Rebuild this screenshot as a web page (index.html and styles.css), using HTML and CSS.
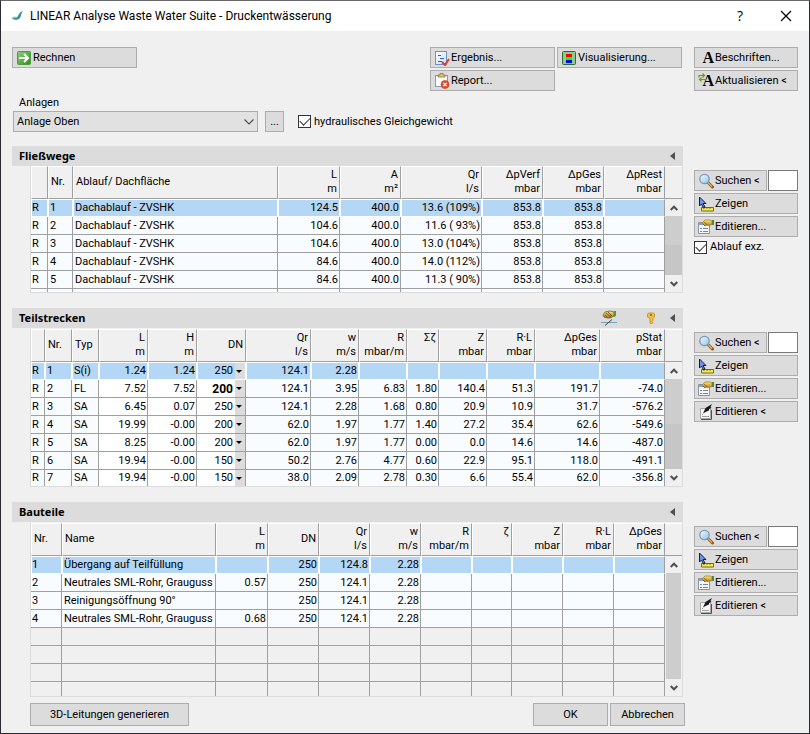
FILE: index.html
```html
<!DOCTYPE html>
<html lang="de">
<head>
<meta charset="utf-8">
<title>LINEAR Analyse Waste Water Suite - Druckentwässerung</title>
<link rel="stylesheet" href="styles.css">
</head>
<body>
<svg class="sprite" aria-hidden="true">
  <defs>
    <linearGradient id="g-green" x1="0" y1="0" x2="1" y2="1"><stop offset="0" stop-color="#8fd07c"/><stop offset="1" stop-color="#2f8f14"/></linearGradient>
    <linearGradient id="g-paper" x1="0" y1="0" x2="1" y2="1"><stop offset="0" stop-color="#fff"/><stop offset="1" stop-color="#c9dcf5"/></linearGradient>
    <linearGradient id="g-lens" x1="0" y1="0" x2="1" y2="1"><stop offset="0" stop-color="#f2fbff"/><stop offset="1" stop-color="#8cc4ee"/></linearGradient>
    <linearGradient id="g-hand" x1="0" y1="0" x2="0" y2="1"><stop offset="0" stop-color="#ffe680"/><stop offset="1" stop-color="#b07a10"/></linearGradient>
  </defs>
  <symbol id="i-run" viewBox="0 0 16 16">
    <rect x="1.500" y="1.500" width="13" height="13" rx="1" fill="url(#g-green)" stroke="#4f9a3c"/>
    <path d="M3 8h8M8 4l4 4-4 4" fill="none" stroke="#fff" stroke-width="2"/>
  </symbol>
  <symbol id="i-result" viewBox="0 0 16 16">
    <rect x="1.500" y="1.500" width="11" height="13" fill="url(#g-paper)" stroke="#6e93c8"/>
    <path d="M4 5.500h3M6 8.500h4M4 11.500h4" stroke="#2c63c8" fill="none"/>
    <path d="M8 12l3 3 4-6" fill="none" stroke="#e03c1c" stroke-width="2"/>
  </symbol>
  <symbol id="i-report" viewBox="0 0 16 16">
    <rect x="1.500" y="2.500" width="12" height="11" fill="#fbfbfd" stroke="#8c98ac"/>
    <path d="M4 4V2h2V.5h3V2h2v2z" fill="#d8c878" stroke="#7c6c34" stroke-width=".7"/>
    <circle cx="11" cy="11.500" r="4" fill="#e8502c" stroke="#c03414" stroke-width=".6"/>
    <path d="M9.300 9.800l3.400 3.400m0-3.400l-3.400 3.400" stroke="#fff" stroke-width="1.200"/>
  </symbol>
  <symbol id="i-visual" viewBox="0 0 16 16">
    <rect x="1.500" y="1.500" width="13" height="13" rx="1" fill="#8fca8f" stroke="#2f6a33"/>
    <path fill="#f00" d="M5 4h6v3H5z"/><path fill="#0f0" d="M5 7h6v3H5z"/><path fill="#00f" d="M5 10h6v3H5z"/>
  </symbol>
  <symbol id="i-swap" viewBox="0 0 8 9">
    <path d="M1 4.500V2.500h5M2.500 6.500H7M4.500.5l2 2-2 2M3.500 4.500l-2 2 2 2" fill="none" stroke="#6a9a10" stroke-width="1.200"/>
  </symbol>
  <symbol id="i-search" viewBox="0 0 16 16">
    <path d="M10 9.500l4.500 4.500" stroke="#8a5a20" stroke-width="3" stroke-linecap="round"/>
    <path d="M10 9.500l4 4" stroke="#f0a850" stroke-width="1.500"/>
    <circle cx="6.500" cy="6" r="4.700" fill="url(#g-lens)" stroke="#7c96b4" stroke-width="1.300"/>
  </symbol>
  <symbol id="i-show" viewBox="0 0 16 16">
    <path d="M3.500 15v-3.500h12V15z" fill="#ffee20" stroke="#666a48"/>
    <path d="M6 11v2m3-2v2m3-2v2" stroke="#4a50a0" stroke-width=".8"/>
    <path d="M1.500 1v9l2-2 2 4 1.500-1-2-3.500h3z" fill="#6c94ec" stroke="#101c40"/>
  </symbol>
  <symbol id="i-props" viewBox="0 0 16 16">
    <path d="M.5 3.500h11v11H.5z" fill="#f4f6fa" stroke="#8c94a4"/>
    <path d="M1 5h10" stroke="#7fa4dc" stroke-width="2"/>
    <path d="M2 9.500h2m1 0h5M2 12.500h2m1 0h5" stroke="#7c8490"/>
    <path d="M4 4l3-3h5l2 1v3.500L11 6.500 9 6 7 7z" fill="url(#g-hand)" stroke="#a07a20" stroke-width=".7"/>
    <path d="M6 3l4 3.500M5 5l2 2" stroke="#5c430c" stroke-width=".6"/>
    <path d="M14 1h2v5h-2z" fill="#4c8c3c"/>
  </symbol>
  <symbol id="i-pen" viewBox="0 0 16 16">
    <path d="M2.500 4.500h10v10h-10z" fill="#f6f6f6" stroke="#a8a8a8"/>
    <path d="M13.500 6v9.500H3" fill="none" stroke="#505050"/>
    <path d="M4 10.500h1M4 12.500h7" stroke="#a0a0a0"/>
    <path d="M5 9.500L7.500 4 14 0l-1.500 3 1 1-2.500 1v1.500L7.500 8z" fill="#181818"/>
  </symbol>
  <symbol id="i-handline" viewBox="0 0 16 16">
    <path d="M2 5l2-3 5-1 4 1v4l-4 2-3 0-3-1z" fill="url(#g-hand)" stroke="#6c4c10" stroke-width=".7"/>
    <path d="M5 3l5 4M7 2l4 4M4 5l2 2" stroke="#3c2c08" stroke-width=".7"/>
    <path d="M13 1h2v5l-2 1z" fill="#4c9c3c"/>
    <path d="M0 12.500h16" stroke="#6ca0c8"/><path d="M4 15.500l7-6" stroke="#404040"/>
  </symbol>
  <symbol id="i-key" viewBox="0 0 8 12">
    <path d="M1.500 1h5l1 1v3l-1.500 1.500v2l-1 1 1 1-2 1.500-1-1V6.500L.5 5V2z" fill="#f4c040" stroke="#c08820" stroke-width=".8"/>
    <circle cx="4" cy="3" r=".9" fill="#7c5408"/>
  </symbol>
  <symbol id="i-tri" viewBox="0 0 5 8"><path d="M5 0v8L0 4z" fill="#505050"/></symbol>
  <symbol id="i-up" viewBox="0 0 8 6"><path d="M.7 5L4 1.700 7.300 5" fill="none" stroke="#505050" stroke-width="2"/></symbol>
  <symbol id="i-down" viewBox="0 0 8 6"><path d="M.7 1L4 4.300 7.300 1" fill="none" stroke="#505050" stroke-width="2"/></symbol>
</svg>

<div class="window">
  <header class="titlebar">
    <svg class="logo" viewBox="0 0 14 12" aria-hidden="true">
      <path d="M1 8.500c2-1 5 0 6.500-2.500S10 1 13 1c-2 1-1.500 4-3 6.500S5 11.500 1 8.500z" fill="#3a9494"/>
      <path d="M1 8.500c1-1.500 3-1.500 5-1" fill="none" stroke="#7cbcbc"/>
    </svg>
    <h1>LINEAR Analyse Waste Water Suite - Druckentwässerung</h1>
    <button class="caption" aria-label="Hilfe">?</button>
    <button class="caption" aria-label="Schließen"><svg width="12" height="12" viewBox="0 0 12 12"><path d="M1 1l10 10M11 1L1 11" stroke="#000" stroke-width="1.200"/></svg></button>
  </header>

  <main class="content">
    <div class="toolbar">
      <button class="btn wide"><svg class="ico"><use href="#i-run"/></svg>Rechnen</button>
      <div class="reports">
        <button class="btn wide"><svg class="ico"><use href="#i-result"/></svg>Ergebnis...</button>
        <button class="btn wide"><svg class="ico"><use href="#i-visual"/></svg>Visualisierung...</button>
        <button class="btn wide"><svg class="ico"><use href="#i-report"/></svg>Report...</button>
      </div>
    </div>
    <div class="side">
      <button class="btn"><span class="ico letter">A</span>Beschriften...</button>
      <button class="btn"><span class="ico letter">A<svg class="swap"><use href="#i-swap"/></svg></span>Aktualisieren &lt;</button>
    </div>

    <div class="plant">
      <label class="plant-label" for="anlage">Anlagen</label>
      <div class="plant-row">
        <div class="combo">
          <select id="anlage"><option>Anlage Oben</option></select>
          <svg class="combo-arrow" viewBox="0 0 10 6"><path d="M.5 .5L5 5 9.500 .5" fill="none" stroke="#505050" stroke-width="1.200"/></svg>
        </div>
        <button class="btn more" aria-label="Anlagen bearbeiten">...</button>
        <label class="check"><input type="checkbox" checked>hydraulisches Gleichgewicht</label>
      </div>
    </div>

    <section class="panel first">
      <div class="panel-head"><h2>Fließwege</h2><button class="mini" aria-label="Einklappen"><svg class="tri"><use href="#i-tri"/></svg></button></div>
      <div class="sheet">
        <table>
          <colgroup><col class="w17"><col class="w25"><col class="w205"><col class="w62"><col class="w61"><col class="w81"><col class="w61"><col class="w61"><col class="w61"></colgroup>
          <thead><tr><th></th><th class="l">Nr.</th><th class="l">Ablauf/ Dachfläche</th><th>L<br>m</th><th>A<br>m²</th><th>Qr<br>l/s</th><th>ΔpVerf<br>mbar</th><th>ΔpGes<br>mbar</th><th>ΔpRest<br>mbar</th></tr></thead>
          <tbody>
            <tr class="sel"><td class="l">R</td><td class="l">1</td><td class="l">Dachablauf - ZVSHK</td><td>124.5</td><td>400.0</td><td>13.6 (109%)</td><td>853.8</td><td>853.8</td><td></td></tr>
            <tr><td class="l">R</td><td class="l">2</td><td class="l">Dachablauf - ZVSHK</td><td>104.6</td><td>400.0</td><td>11.6 ( 93%)</td><td>853.8</td><td>853.8</td><td></td></tr>
            <tr><td class="l">R</td><td class="l">3</td><td class="l">Dachablauf - ZVSHK</td><td>104.6</td><td>400.0</td><td>13.0 (104%)</td><td>853.8</td><td>853.8</td><td></td></tr>
            <tr><td class="l">R</td><td class="l">4</td><td class="l">Dachablauf - ZVSHK</td><td>84.6</td><td>400.0</td><td>14.0 (112%)</td><td>853.8</td><td>853.8</td><td></td></tr>
            <tr><td class="l">R</td><td class="l">5</td><td class="l">Dachablauf - ZVSHK</td><td>84.6</td><td>400.0</td><td>11.3 ( 90%)</td><td>853.8</td><td>853.8</td><td></td></tr>
            <tr class="stub"><td></td><td></td><td></td><td></td><td></td><td></td><td></td><td></td><td></td></tr>
          </tbody>
        </table>
        <div class="scroll">
          <div class="scroll-head"></div>
          <button class="arrow" aria-label="Nach oben"><svg><use href="#i-up"/></svg></button>
          <div class="track half"></div>
          <button class="arrow" aria-label="Nach unten"><svg><use href="#i-down"/></svg></button>
        </div>
      </div>
    </section>
    <div class="side tools">
      <div class="find"><button class="btn"><svg class="ico"><use href="#i-search"/></svg>Suchen &lt;</button><input type="text" aria-label="Nummer des Fließwegs"></div>
      <button class="btn"><svg class="ico"><use href="#i-show"/></svg>Zeigen</button>
      <button class="btn"><svg class="ico"><use href="#i-props"/></svg>Editieren...</button>
      <label class="check"><input type="checkbox" checked>Ablauf exz.</label>
    </div>

    <section class="panel">
      <div class="panel-head"><h2>Teilstrecken</h2>
        <button class="mini" aria-label="Eigenschaften"><svg class="ico"><use href="#i-handline"/></svg></button>
        <button class="mini key" aria-label="Schlüssel"><svg class="keyico"><use href="#i-key"/></svg></button>
        <button class="mini" aria-label="Einklappen"><svg class="tri"><use href="#i-tri"/></svg></button></div>
      <div class="sheet">
        <table class="editable">
          <colgroup><col class="w14"><col class="w27"><col class="w27"><col class="w49"><col class="w49"><col class="w49"><col class="w65"><col class="w48"><col class="w48"><col class="w32"><col class="w48"><col class="w48"><col class="w65"><col class="w65"></colgroup>
          <thead><tr><th></th><th class="l">Nr.</th><th class="l">Typ</th><th>L<br>m</th><th>H<br>m</th><th>DN</th><th>Qr<br>l/s</th><th>w<br>m/s</th><th>R<br>mbar/m</th><th>Σζ<br>&nbsp;</th><th>Z<br>mbar</th><th>R·L<br>mbar</th><th>ΔpGes<br>mbar</th><th>pStat<br>mbar</th></tr></thead>
          <tbody>
            <tr class="sel"><td class="l">R</td><td class="l">1</td><td class="l">S(i)</td><td>1.24</td><td>1.24</td><td class="dn"><select aria-label="DN 1"><option>250</option></select></td><td>124.1</td><td>2.28</td><td></td><td></td><td></td><td></td><td></td><td></td></tr>
            <tr><td class="l">R</td><td class="l">2</td><td class="l">FL</td><td>7.52</td><td>7.52</td><td class="dn bold"><select aria-label="DN 2"><option>200</option></select></td><td>124.1</td><td>3.95</td><td>6.83</td><td>1.80</td><td>140.4</td><td>51.3</td><td>191.7</td><td>-74.0</td></tr>
            <tr><td class="l">R</td><td class="l">3</td><td class="l">SA</td><td>6.45</td><td>0.07</td><td class="dn"><select aria-label="DN 3"><option>250</option></select></td><td>124.1</td><td>2.28</td><td>1.68</td><td>0.80</td><td>20.9</td><td>10.9</td><td>31.7</td><td>-576.2</td></tr>
            <tr><td class="l">R</td><td class="l">4</td><td class="l">SA</td><td>19.99</td><td>-0.00</td><td class="dn"><select aria-label="DN 4"><option>200</option></select></td><td>62.0</td><td>1.97</td><td>1.77</td><td>1.40</td><td>27.2</td><td>35.4</td><td>62.6</td><td>-549.6</td></tr>
            <tr><td class="l">R</td><td class="l">5</td><td class="l">SA</td><td>8.25</td><td>-0.00</td><td class="dn"><select aria-label="DN 5"><option>200</option></select></td><td>62.0</td><td>1.97</td><td>1.77</td><td>0.00</td><td>0.0</td><td>14.6</td><td>14.6</td><td>-487.0</td></tr>
            <tr><td class="l">R</td><td class="l">6</td><td class="l">SA</td><td>19.94</td><td>-0.00</td><td class="dn"><select aria-label="DN 6"><option>150</option></select></td><td>50.2</td><td>2.76</td><td>4.77</td><td>0.60</td><td>22.9</td><td>95.1</td><td>118.0</td><td>-491.1</td></tr>
            <tr class="last"><td class="l">R</td><td class="l">7</td><td class="l">SA</td><td>19.94</td><td>-0.00</td><td class="dn"><select aria-label="DN 7"><option>150</option></select></td><td>38.0</td><td>2.09</td><td>2.78</td><td>0.30</td><td>6.6</td><td>55.4</td><td>62.0</td><td>-356.8</td></tr>
          </tbody>
        </table>
        <div class="scroll">
          <div class="scroll-head"></div>
          <button class="arrow" aria-label="Nach oben"><svg><use href="#i-up"/></svg></button>
          <div class="track half"></div>
          <button class="arrow" aria-label="Nach unten"><svg><use href="#i-down"/></svg></button>
        </div>
      </div>
    </section>
    <div class="side tools">
      <div class="find"><button class="btn"><svg class="ico"><use href="#i-search"/></svg>Suchen &lt;</button><input type="text" aria-label="Nummer der Teilstrecke"></div>
      <button class="btn"><svg class="ico"><use href="#i-show"/></svg>Zeigen</button>
      <button class="btn"><svg class="ico"><use href="#i-props"/></svg>Editieren...</button>
      <button class="btn"><svg class="ico"><use href="#i-pen"/></svg>Editieren &lt;</button>
    </div>

    <section class="panel">
      <div class="panel-head"><h2>Bauteile</h2><button class="mini" aria-label="Einklappen"><svg class="tri"><use href="#i-tri"/></svg></button></div>
      <div class="sheet">
        <table>
          <colgroup><col class="w31"><col class="w154"><col class="w52"><col class="w51"><col class="w51"><col class="w51"><col class="w51"><col class="w40"><col class="w51"><col class="w51"><col class="w51"></colgroup>
          <thead><tr><th class="l">Nr.</th><th class="l">Name</th><th>L<br>m</th><th>DN</th><th>Qr<br>l/s</th><th>w<br>m/s</th><th>R<br>mbar/m</th><th>ζ<br>&nbsp;</th><th>Z<br>mbar</th><th>R·L<br>mbar</th><th>ΔpGes<br>mbar</th></tr></thead>
          <tbody>
            <tr class="sel"><td class="l">1</td><td class="l">Übergang auf Teilfüllung</td><td></td><td>250</td><td>124.8</td><td>2.28</td><td></td><td></td><td></td><td></td><td></td></tr>
            <tr><td class="l">2</td><td class="l">Neutrales SML-Rohr, Grauguss</td><td>0.57</td><td>250</td><td>124.1</td><td>2.28</td><td></td><td></td><td></td><td></td><td></td></tr>
            <tr><td class="l">3</td><td class="l">Reinigungsöffnung 90°</td><td></td><td>250</td><td>124.1</td><td>2.28</td><td></td><td></td><td></td><td></td><td></td></tr>
            <tr><td class="l">4</td><td class="l">Neutrales SML-Rohr, Grauguss</td><td>0.68</td><td>250</td><td>124.1</td><td>2.28</td><td></td><td></td><td></td><td></td><td></td></tr>
            <tr class="empty"><td></td><td></td><td></td><td></td><td></td><td></td><td></td><td></td><td></td><td></td><td></td></tr>
            <tr class="empty"><td></td><td></td><td></td><td></td><td></td><td></td><td></td><td></td><td></td><td></td><td></td></tr>
            <tr class="empty"><td></td><td></td><td></td><td></td><td></td><td></td><td></td><td></td><td></td><td></td><td></td></tr>
            <tr class="empty cut"><td></td><td></td><td></td><td></td><td></td><td></td><td></td><td></td><td></td><td></td><td></td></tr>
          </tbody>
        </table>
        <div class="scroll">
          <div class="scroll-head"></div>
          <button class="arrow" aria-label="Nach oben"><svg><use href="#i-up"/></svg></button>
          <div class="track narrow"></div>
          <button class="arrow" aria-label="Nach unten"><svg><use href="#i-down"/></svg></button>
        </div>
      </div>
    </section>
    <div class="side tools">
      <div class="find"><button class="btn"><svg class="ico"><use href="#i-search"/></svg>Suchen &lt;</button><input type="text" aria-label="Nummer des Bauteils"></div>
      <button class="btn"><svg class="ico"><use href="#i-show"/></svg>Zeigen</button>
      <button class="btn"><svg class="ico"><use href="#i-props"/></svg>Editieren...</button>
      <button class="btn"><svg class="ico"><use href="#i-pen"/></svg>Editieren &lt;</button>
    </div>
  </main>

  <footer class="footer">
    <button class="btn text generate">3D-Leitungen generieren</button>
    <button class="btn text">OK</button>
    <button class="btn text">Abbrechen</button>
  </footer>
</div>
</body>
</html>
```
FILE: styles.css
```css
* { box-sizing: border-box; }

body {
  margin: 0;
  background: #f0f0f0;
  color: #000;
  font: 11px/14px Roboto, sans-serif;
}

button, input, select { font: inherit; color: inherit; margin: 0; }
.sprite { position: absolute; width: 0; height: 0; }

.window {
  display: flex;
  flex-direction: column;
  min-height: 100vh;
  border: 1px solid #2b2b33;
  border-top-color: #68686c;
}

/* Title bar */
.titlebar {
  display: flex;
  align-items: center;
  height: 30px;
  padding-left: 10px;
  background: #fff;
}
.logo { width: 13px; height: 12px; margin-right: 6px; }
.titlebar h1 { flex: 1; margin: 0; font: 12px/16px Roboto, sans-serif; }
.caption {
  display: flex;
  align-items: center;
  justify-content: center;
  width: 46px;
  height: 28px;
  padding: 0;
  border: 0;
  background: none;
  font-family: "Open Sans", sans-serif;
  font-size: 14px;
}

/* Page grid */
.content {
  display: grid;
  grid-template-columns: 1fr 104px;
  column-gap: 11px;
  padding: 16px 11px 0;
}
.toolbar { display: flex; justify-content: space-between; align-items: flex-start; }
.reports {
  display: grid;
  grid-template-columns: 125px 125px;
  gap: 2px;
  padding-right: 1px;
}
.side { display: flex; flex-direction: column; gap: 2px; }
.tools { padding-top: 24px; }

/* Controls */
.btn {
  display: flex;
  align-items: center;
  gap: 1px;
  height: 21px;
  padding: 0 0 0 3px;
  border: 1px solid #adadad;
  background: #dcdcdc;
  white-space: nowrap;
}
.wide { width: 125px; }
.ico { width: 16px; height: 16px; flex: none; }
.letter { position: relative; font: bold 16px/16px "Liberation Serif", serif; text-align: right; }
.swap { position: absolute; left: 0; top: 0; width: 8px; height: 9px; }
.more, .text { justify-content: center; padding: 0; }
.more { width: 19px; }
.check { display: flex; align-items: center; gap: 3px; }
.check input {
  appearance: none;
  width: 13px;
  height: 13px;
  border: 1px solid #333;
  background: #fff;
  display: grid;
  place-items: center;
}
.check input:checked::after {
  content: "";
  width: 9px;
  height: 5px;
  margin-top: -3px;
  border: solid #333;
  border-width: 0 0 1px 1px;
  rotate: -45deg;
}
.tools .check { margin-top: 1px; }
.find { display: grid; grid-template-columns: 1fr 30px; gap: 1px; }
.find input {
  width: 100%;
  height: 21px;
  border: 1px solid #7a7a7a;
  background: #fff;
}

.plant { grid-column: 1 / -1; padding: 4px 0 14px 1px; }
.plant-label { display: block; padding-left: 6px; line-height: 16px; }
.plant-row { display: flex; align-items: center; }
.combo { position: relative; width: 245px; }
.combo select {
  appearance: none;
  display: block;
  width: 100%;
  height: 21px;
  padding: 0 3px;
  border: 1px solid #adadad;
  border-radius: 0;
  background: #e1e1e1;
}
.combo-arrow {
  position: absolute;
  right: 4px;
  top: 8px;
  width: 10px;
  height: 6px;
  pointer-events: none;
}
.plant-row .more { margin: 0 14px 0 7px; }

/* Panels */
.panel { margin-bottom: 15px; }
.panel-head {
  display: flex;
  align-items: center;
  height: 20px;
  padding: 0 8px 0 7px;
  background: #dcdcdc;
}
.panel-head h2 { flex: 1; margin: 0; font: bold 11px/16px "Noto Sans", sans-serif; }
.mini { display: flex; padding: 0; border: 0; background: none; }
.key { margin: 0 15px 0 30px; }
.keyico { width: 8px; height: 12px; }
.tri { width: 5px; height: 8px; }

.sheet {
  display: grid;
  grid-template-columns: 1fr 17px;
  margin-left: 18px;
  border: 1px solid #dcdcdc;
  border-top-color: #f0f0f0;
}
.first .sheet { border-top: 0; }

table {
  width: 100%;
  table-layout: fixed;
  border-collapse: separate;
  border-spacing: 0;
  font: 11px/14px Roboto, sans-serif;
}
th {
  height: 33px;
  padding: 0 2px 2px 1px;
  border: 1px solid #a0a0a0;
  border-top-color: #fff;
  border-left-color: #fff;
  font-weight: normal;
  text-align: right;
  white-space: nowrap;
}
td {
  height: 18px;
  padding: 0 1px;
  border: solid #a0a0a0;
  border-width: 0 1px 1px 0;
  background: #f8fcff;
  line-height: 16px;
  text-align: right;
  white-space: nowrap;
}
.l { text-align: left; }
th.l { padding-left: 2px; }
td:nth-child(n+2).l { padding-left: 2px; }
.sel td {
  border-color: #fff;
  border-width: 1px;
  padding-left: 0;
  background: #b4d7f5;
}
.sel td:nth-child(n+2).l { padding-left: 1px; }
.sel td:last-child { border-right-color: #a0a0a0; }
.stub td { height: 3px; border-bottom: 0; }
.last td { height: 16px; border-bottom: 0; }
.empty td { background: #f0f0f0; }
.cut td { height: 14px; border-bottom: 0; }
.editable tr:not(.sel) td:nth-child(n+4):nth-child(-n+6) { background: #fff; }

td.dn { position: relative; padding: 0 10px 0 0; }
.dn select {
  appearance: none;
  display: block;
  width: 100%;
  height: 16px;
  padding: 0 2px 0 0;
  border: 0;
  background: none;
  text-align: right;
  text-align-last: right;
}
.dn::before {
  content: "";
  position: absolute;
  inset: 0 0 0 auto;
  width: 10px;
  background: #dcdcdc;
}
.dn::after {
  content: "";
  position: absolute;
  right: 3px;
  top: 7px;
  border: solid transparent;
  border-width: 3px 3px 0;
  border-top-color: #000;
}
.bold select { font-weight: bold; font-size: 12px; }

.w14 { width: 14px; } .w17 { width: 17px; } .w25 { width: 25px; } .w27 { width: 27px; }
.w31 { width: 31px; } .w32 { width: 32px; } .w40 { width: 40px; } .w48 { width: 48px; }
.w49 { width: 49px; } .w51 { width: 51px; } .w52 { width: 52px; } .w61 { width: 61px; }
.w62 { width: 62px; } .w65 { width: 65px; } .w81 { width: 81px; } .w154 { width: 154px; }
.w205 { width: 205px; }

/* Scroll bars */
.scroll { display: flex; flex-direction: column; }
.scroll-head { height: 33px; border-top: 1px solid #fff; border-bottom: 1px solid #a0a0a0; }
.arrow {
  display: grid;
  place-items: center;
  height: 17px;
  padding: 0;
  border: 0;
  background: #f0f0f0;
}
.arrow svg { width: 8px; height: 6px; }
.track { flex: 1; background: #cdcdcd; }
.half { background: linear-gradient(#cdcdcd 50%, #c6c6c6 50%); }
.narrow { margin: 0 1px; }

/* Footer */
.footer { display: flex; gap: 2px; padding: 0 124px 7px 29px; margin-top: -9px; }
.footer .btn { width: 75px; height: 23px; }
.footer .generate { width: 159px; margin-right: auto; }
```
